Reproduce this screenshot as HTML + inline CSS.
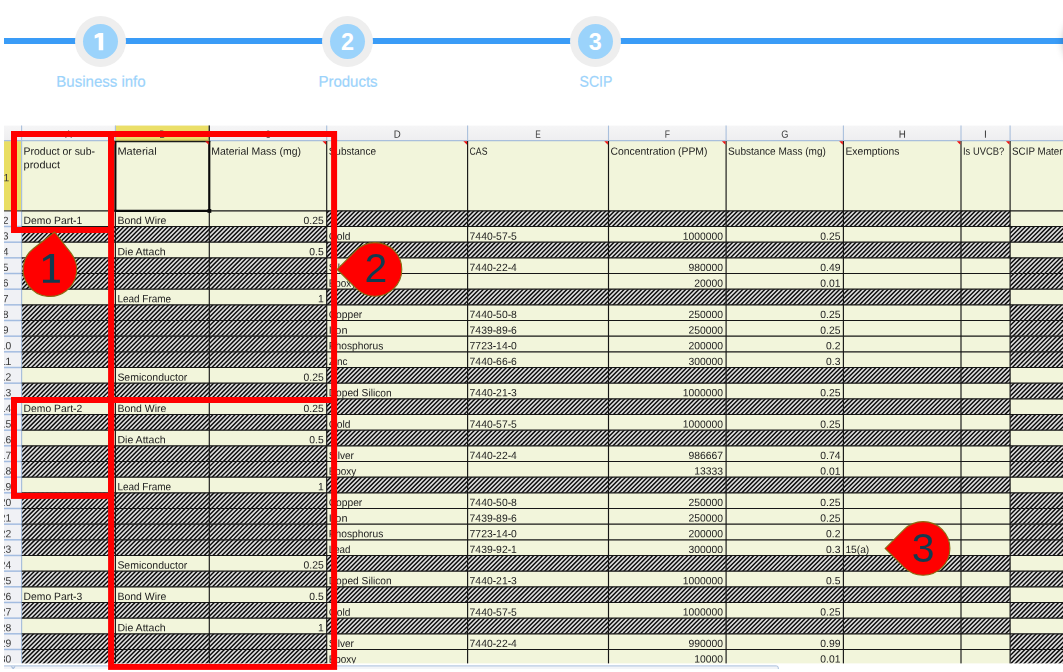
<!DOCTYPE html>
<html lang="en">
<head>
<meta charset="utf-8">
<title>SCIP template guide</title>
<style>
html,body{margin:0;padding:0;background:#fff;}
body{width:1063px;height:672px;overflow:hidden;position:relative;font-family:"Liberation Sans",sans-serif;}
.bar{position:absolute;left:4px;top:38px;width:1059px;height:6px;background:#3a9cf7;}
.ring{position:absolute;top:15.75px;width:51px;height:51px;border-radius:50%;background:#eeeeee;}
.dot{position:absolute;overflow:hidden;top:23.75px;width:35px;height:35px;border-radius:50%;background:#9bd3fb;color:#fff;
  font-weight:bold;font-size:23.4px;line-height:36.6px;text-align:center;}
.lab{position:absolute;top:72px;width:200px;text-align:center;color:#9bd3fb;font-size:15.5px;line-height:18px;white-space:nowrap;-webkit-text-stroke:0.2px #9bd3fb;}
.edge{position:absolute;left:1064.5px;top:15.75px;width:51px;height:51px;border-radius:50%;background:#eee;
  box-shadow:0 0 8px 1px rgba(0,0,0,.30);}
svg{position:absolute;left:0;top:0;will-change:transform;font-family:"Liberation Sans",sans-serif;}
</style>
</head>
<body>
<div class="bar"></div>
<div class="ring" style="left:75.00px"></div><div class="dot" style="left:83.00px"><svg width="35" height="35" viewBox="0 0 35 35" style="position:absolute;left:0;top:0"><path d="M15.75,9.05 L20.25,9.05 L20.25,26.15 L15.75,26.15 L15.75,13.3 L11.7,14.6 L11.7,11.3 Z" fill="#fff"/></svg></div><div class="lab" style="left:0.50px;transform:translateY(0.8px) scaleX(0.968) rotate(0.06deg)">Business info</div><div class="ring" style="left:322.10px"></div><div class="dot" style="left:330.10px">2</div><div class="lab" style="left:247.60px;transform:translateY(0.8px) scaleX(0.968) rotate(0.06deg)">Products</div><div class="ring" style="left:569.70px"></div><div class="dot" style="left:577.70px">3</div><div class="lab" style="left:495.60px;transform:translateY(0.8px) scaleX(0.905) rotate(0.06deg)">SCIP</div>
<div class="edge"></div>
<svg width="1063" height="672" viewBox="0 0 1063 672">
<defs>
<linearGradient id="hg" x1="0" y1="0" x2="0" y2="1"><stop offset="0" stop-color="#f5f5f6"/><stop offset="1" stop-color="#eeeef0"/></linearGradient>
<clipPath id="sheet"><rect x="4.00" y="125.60" width="1061.00" height="543.00"/></clipPath>
<filter id="soft" x="0" y="0" width="100%" height="100%" filterUnits="userSpaceOnUse" color-interpolation-filters="sRGB"><feGaussianBlur stdDeviation="0.33"/></filter>
</defs>
<g clip-path="url(#sheet)"><g filter="url(#soft)">
<rect x="4.00" y="125.60" width="1063.00" height="543.00" fill="#ffffff" />
<rect x="4.00" y="125.60" width="1063.00" height="15.00" fill="url(#hg)" />
<rect x="4.00" y="140.60" width="17.60" height="524.53" fill="#f0f1f5" />
<rect x="115.40" y="125.60" width="93.90" height="14.50" fill="#ebdf68" />
<rect x="4.00" y="141.10" width="17.60" height="69.75" fill="#e9de63" />
<rect x="21.60" y="140.60" width="1045.40" height="524.53" fill="#f2f5db" />
<clipPath id="hc"><rect x="326.70" y="210.85" width="683.40" height="15.66"/><rect x="21.60" y="226.51" width="305.10" height="15.66"/><rect x="1010.10" y="226.51" width="56.90" height="15.66"/><rect x="326.70" y="242.18" width="683.40" height="15.66"/><rect x="21.60" y="257.84" width="305.10" height="15.66"/><rect x="1010.10" y="257.84" width="56.90" height="15.66"/><rect x="21.60" y="273.51" width="305.10" height="15.66"/><rect x="1010.10" y="273.51" width="56.90" height="15.66"/><rect x="326.70" y="289.17" width="683.40" height="15.66"/><rect x="21.60" y="304.84" width="305.10" height="15.66"/><rect x="1010.10" y="304.84" width="56.90" height="15.66"/><rect x="21.60" y="320.50" width="305.10" height="15.66"/><rect x="1010.10" y="320.50" width="56.90" height="15.66"/><rect x="21.60" y="336.17" width="305.10" height="15.66"/><rect x="1010.10" y="336.17" width="56.90" height="15.66"/><rect x="21.60" y="351.83" width="305.10" height="15.66"/><rect x="1010.10" y="351.83" width="56.90" height="15.66"/><rect x="326.70" y="367.50" width="683.40" height="15.66"/><rect x="21.60" y="383.16" width="305.10" height="15.66"/><rect x="1010.10" y="383.16" width="56.90" height="15.66"/><rect x="326.70" y="398.83" width="683.40" height="15.66"/><rect x="21.60" y="414.50" width="305.10" height="15.66"/><rect x="1010.10" y="414.50" width="56.90" height="15.66"/><rect x="326.70" y="430.16" width="683.40" height="15.66"/><rect x="21.60" y="445.82" width="305.10" height="15.66"/><rect x="1010.10" y="445.82" width="56.90" height="15.66"/><rect x="21.60" y="461.49" width="305.10" height="15.66"/><rect x="1010.10" y="461.49" width="56.90" height="15.66"/><rect x="326.70" y="477.15" width="683.40" height="15.66"/><rect x="21.60" y="492.82" width="305.10" height="15.66"/><rect x="1010.10" y="492.82" width="56.90" height="15.66"/><rect x="21.60" y="508.49" width="305.10" height="15.66"/><rect x="1010.10" y="508.49" width="56.90" height="15.66"/><rect x="21.60" y="524.15" width="305.10" height="15.66"/><rect x="1010.10" y="524.15" width="56.90" height="15.66"/><rect x="21.60" y="539.81" width="305.10" height="15.66"/><rect x="1010.10" y="539.81" width="56.90" height="15.66"/><rect x="326.70" y="555.48" width="683.40" height="15.66"/><rect x="21.60" y="571.14" width="305.10" height="15.66"/><rect x="1010.10" y="571.14" width="56.90" height="15.66"/><rect x="326.70" y="586.81" width="683.40" height="15.66"/><rect x="21.60" y="602.48" width="305.10" height="15.66"/><rect x="1010.10" y="602.48" width="56.90" height="15.66"/><rect x="326.70" y="618.14" width="683.40" height="15.66"/><rect x="21.60" y="633.80" width="305.10" height="15.66"/><rect x="1010.10" y="633.80" width="56.90" height="15.66"/><rect x="21.60" y="649.47" width="305.10" height="15.66"/><rect x="1010.10" y="649.47" width="56.90" height="15.66"/></clipPath>
<rect x="326.70" y="210.85" width="683.40" height="15.66" fill="#dedede" />
<rect x="21.60" y="226.51" width="305.10" height="15.66" fill="#dedede" />
<rect x="1010.10" y="226.51" width="56.90" height="15.66" fill="#dedede" />
<rect x="326.70" y="242.18" width="683.40" height="15.66" fill="#dedede" />
<rect x="21.60" y="257.84" width="305.10" height="15.66" fill="#dedede" />
<rect x="1010.10" y="257.84" width="56.90" height="15.66" fill="#dedede" />
<rect x="21.60" y="273.51" width="305.10" height="15.66" fill="#dedede" />
<rect x="1010.10" y="273.51" width="56.90" height="15.66" fill="#dedede" />
<rect x="326.70" y="289.17" width="683.40" height="15.66" fill="#dedede" />
<rect x="21.60" y="304.84" width="305.10" height="15.66" fill="#dedede" />
<rect x="1010.10" y="304.84" width="56.90" height="15.66" fill="#dedede" />
<rect x="21.60" y="320.50" width="305.10" height="15.66" fill="#dedede" />
<rect x="1010.10" y="320.50" width="56.90" height="15.66" fill="#dedede" />
<rect x="21.60" y="336.17" width="305.10" height="15.66" fill="#dedede" />
<rect x="1010.10" y="336.17" width="56.90" height="15.66" fill="#dedede" />
<rect x="21.60" y="351.83" width="305.10" height="15.66" fill="#dedede" />
<rect x="1010.10" y="351.83" width="56.90" height="15.66" fill="#dedede" />
<rect x="326.70" y="367.50" width="683.40" height="15.66" fill="#dedede" />
<rect x="21.60" y="383.16" width="305.10" height="15.66" fill="#dedede" />
<rect x="1010.10" y="383.16" width="56.90" height="15.66" fill="#dedede" />
<rect x="326.70" y="398.83" width="683.40" height="15.66" fill="#dedede" />
<rect x="21.60" y="414.50" width="305.10" height="15.66" fill="#dedede" />
<rect x="1010.10" y="414.50" width="56.90" height="15.66" fill="#dedede" />
<rect x="326.70" y="430.16" width="683.40" height="15.66" fill="#dedede" />
<rect x="21.60" y="445.82" width="305.10" height="15.66" fill="#dedede" />
<rect x="1010.10" y="445.82" width="56.90" height="15.66" fill="#dedede" />
<rect x="21.60" y="461.49" width="305.10" height="15.66" fill="#dedede" />
<rect x="1010.10" y="461.49" width="56.90" height="15.66" fill="#dedede" />
<rect x="326.70" y="477.15" width="683.40" height="15.66" fill="#dedede" />
<rect x="21.60" y="492.82" width="305.10" height="15.66" fill="#dedede" />
<rect x="1010.10" y="492.82" width="56.90" height="15.66" fill="#dedede" />
<rect x="21.60" y="508.49" width="305.10" height="15.66" fill="#dedede" />
<rect x="1010.10" y="508.49" width="56.90" height="15.66" fill="#dedede" />
<rect x="21.60" y="524.15" width="305.10" height="15.66" fill="#dedede" />
<rect x="1010.10" y="524.15" width="56.90" height="15.66" fill="#dedede" />
<rect x="21.60" y="539.81" width="305.10" height="15.66" fill="#dedede" />
<rect x="1010.10" y="539.81" width="56.90" height="15.66" fill="#dedede" />
<rect x="326.70" y="555.48" width="683.40" height="15.66" fill="#dedede" />
<rect x="21.60" y="571.14" width="305.10" height="15.66" fill="#dedede" />
<rect x="1010.10" y="571.14" width="56.90" height="15.66" fill="#dedede" />
<rect x="326.70" y="586.81" width="683.40" height="15.66" fill="#dedede" />
<rect x="21.60" y="602.48" width="305.10" height="15.66" fill="#dedede" />
<rect x="1010.10" y="602.48" width="56.90" height="15.66" fill="#dedede" />
<rect x="326.70" y="618.14" width="683.40" height="15.66" fill="#dedede" />
<rect x="21.60" y="633.80" width="305.10" height="15.66" fill="#dedede" />
<rect x="1010.10" y="633.80" width="56.90" height="15.66" fill="#dedede" />
<rect x="21.60" y="649.47" width="305.10" height="15.66" fill="#dedede" />
<rect x="1010.10" y="649.47" width="56.90" height="15.66" fill="#dedede" />
<path clip-path="url(#hc)" d="M-439.68,667.13L18.60,208.85M-435.29,667.13L23.00,208.85M-430.89,667.13L27.40,208.85M-426.49,667.13L31.79,208.85M-422.09,667.13L36.19,208.85M-417.69,667.13L40.59,208.85M-413.30,667.13L44.99,208.85M-408.90,667.13L49.39,208.85M-404.50,667.13L53.79,208.85M-400.10,667.13L58.18,208.85M-395.70,667.13L62.58,208.85M-391.30,667.13L66.98,208.85M-386.91,667.13L71.38,208.85M-382.51,667.13L75.78,208.85M-378.11,667.13L80.17,208.85M-373.71,667.13L84.57,208.85M-369.31,667.13L88.97,208.85M-364.92,667.13L93.37,208.85M-360.52,667.13L97.77,208.85M-356.12,667.13L102.17,208.85M-351.72,667.13L106.56,208.85M-347.32,667.13L110.96,208.85M-342.92,667.13L115.36,208.85M-338.53,667.13L119.76,208.85M-334.13,667.13L124.16,208.85M-329.73,667.13L128.56,208.85M-325.33,667.13L132.95,208.85M-320.93,667.13L137.35,208.85M-316.54,667.13L141.75,208.85M-312.14,667.13L146.15,208.85M-307.74,667.13L150.55,208.85M-303.34,667.13L154.94,208.85M-298.94,667.13L159.34,208.85M-294.54,667.13L163.74,208.85M-290.15,667.13L168.14,208.85M-285.75,667.13L172.54,208.85M-281.35,667.13L176.94,208.85M-276.95,667.13L181.33,208.85M-272.55,667.13L185.73,208.85M-268.16,667.13L190.13,208.85M-263.76,667.13L194.53,208.85M-259.36,667.13L198.93,208.85M-254.96,667.13L203.32,208.85M-250.56,667.13L207.72,208.85M-246.16,667.13L212.12,208.85M-241.77,667.13L216.52,208.85M-237.37,667.13L220.92,208.85M-232.97,667.13L225.32,208.85M-228.57,667.13L229.71,208.85M-224.17,667.13L234.11,208.85M-219.77,667.13L238.51,208.85M-215.38,667.13L242.91,208.85M-210.98,667.13L247.31,208.85M-206.58,667.13L251.70,208.85M-202.18,667.13L256.10,208.85M-197.78,667.13L260.50,208.85M-193.39,667.13L264.90,208.85M-188.99,667.13L269.30,208.85M-184.59,667.13L273.70,208.85M-180.19,667.13L278.09,208.85M-175.79,667.13L282.49,208.85M-171.39,667.13L286.89,208.85M-167.00,667.13L291.29,208.85M-162.60,667.13L295.69,208.85M-158.20,667.13L300.09,208.85M-153.80,667.13L304.48,208.85M-149.40,667.13L308.88,208.85M-145.01,667.13L313.28,208.85M-140.61,667.13L317.68,208.85M-136.21,667.13L322.08,208.85M-131.81,667.13L326.47,208.85M-127.41,667.13L330.87,208.85M-123.01,667.13L335.27,208.85M-118.62,667.13L339.67,208.85M-114.22,667.13L344.07,208.85M-109.82,667.13L348.47,208.85M-105.42,667.13L352.86,208.85M-101.02,667.13L357.26,208.85M-96.63,667.13L361.66,208.85M-92.23,667.13L366.06,208.85M-87.83,667.13L370.46,208.85M-83.43,667.13L374.85,208.85M-79.03,667.13L379.25,208.85M-74.63,667.13L383.65,208.85M-70.24,667.13L388.05,208.85M-65.84,667.13L392.45,208.85M-61.44,667.13L396.85,208.85M-57.04,667.13L401.24,208.85M-52.64,667.13L405.64,208.85M-48.24,667.13L410.04,208.85M-43.85,667.13L414.44,208.85M-39.45,667.13L418.84,208.85M-35.05,667.13L423.23,208.85M-30.65,667.13L427.63,208.85M-26.25,667.13L432.03,208.85M-21.86,667.13L436.43,208.85M-17.46,667.13L440.83,208.85M-13.06,667.13L445.23,208.85M-8.66,667.13L449.62,208.85M-4.26,667.13L454.02,208.85M0.14,667.13L458.42,208.85M4.53,667.13L462.82,208.85M8.93,667.13L467.22,208.85M13.33,667.13L471.62,208.85M17.73,667.13L476.01,208.85M22.13,667.13L480.41,208.85M26.52,667.13L484.81,208.85M30.92,667.13L489.21,208.85M35.32,667.13L493.61,208.85M39.72,667.13L498.00,208.85M44.12,667.13L502.40,208.85M48.52,667.13L506.80,208.85M52.91,667.13L511.20,208.85M57.31,667.13L515.60,208.85M61.71,667.13L520.00,208.85M66.11,667.13L524.39,208.85M70.51,667.13L528.79,208.85M74.90,667.13L533.19,208.85M79.30,667.13L537.59,208.85M83.70,667.13L541.99,208.85M88.10,667.13L546.38,208.85M92.50,667.13L550.78,208.85M96.90,667.13L555.18,208.85M101.29,667.13L559.58,208.85M105.69,667.13L563.98,208.85M110.09,667.13L568.38,208.85M114.49,667.13L572.77,208.85M118.89,667.13L577.17,208.85M123.29,667.13L581.57,208.85M127.68,667.13L585.97,208.85M132.08,667.13L590.37,208.85M136.48,667.13L594.76,208.85M140.88,667.13L599.16,208.85M145.28,667.13L603.56,208.85M149.67,667.13L607.96,208.85M154.07,667.13L612.36,208.85M158.47,667.13L616.76,208.85M162.87,667.13L621.15,208.85M167.27,667.13L625.55,208.85M171.67,667.13L629.95,208.85M176.06,667.13L634.35,208.85M180.46,667.13L638.75,208.85M184.86,667.13L643.14,208.85M189.26,667.13L647.54,208.85M193.66,667.13L651.94,208.85M198.05,667.13L656.34,208.85M202.45,667.13L660.74,208.85M206.85,667.13L665.14,208.85M211.25,667.13L669.53,208.85M215.65,667.13L673.93,208.85M220.05,667.13L678.33,208.85M224.44,667.13L682.73,208.85M228.84,667.13L687.13,208.85M233.24,667.13L691.53,208.85M237.64,667.13L695.92,208.85M242.04,667.13L700.32,208.85M246.43,667.13L704.72,208.85M250.83,667.13L709.12,208.85M255.23,667.13L713.52,208.85M259.63,667.13L717.91,208.85M264.03,667.13L722.31,208.85M268.43,667.13L726.71,208.85M272.82,667.13L731.11,208.85M277.22,667.13L735.51,208.85M281.62,667.13L739.91,208.85M286.02,667.13L744.30,208.85M290.42,667.13L748.70,208.85M294.82,667.13L753.10,208.85M299.21,667.13L757.50,208.85M303.61,667.13L761.90,208.85M308.01,667.13L766.29,208.85M312.41,667.13L770.69,208.85M316.81,667.13L775.09,208.85M321.20,667.13L779.49,208.85M325.60,667.13L783.89,208.85M330.00,667.13L788.29,208.85M334.40,667.13L792.68,208.85M338.80,667.13L797.08,208.85M343.20,667.13L801.48,208.85M347.59,667.13L805.88,208.85M351.99,667.13L810.28,208.85M356.39,667.13L814.67,208.85M360.79,667.13L819.07,208.85M365.19,667.13L823.47,208.85M369.58,667.13L827.87,208.85M373.98,667.13L832.27,208.85M378.38,667.13L836.67,208.85M382.78,667.13L841.06,208.85M387.18,667.13L845.46,208.85M391.58,667.13L849.86,208.85M395.97,667.13L854.26,208.85M400.37,667.13L858.66,208.85M404.77,667.13L863.06,208.85M409.17,667.13L867.45,208.85M413.57,667.13L871.85,208.85M417.96,667.13L876.25,208.85M422.36,667.13L880.65,208.85M426.76,667.13L885.05,208.85M431.16,667.13L889.44,208.85M435.56,667.13L893.84,208.85M439.96,667.13L898.24,208.85M444.35,667.13L902.64,208.85M448.75,667.13L907.04,208.85M453.15,667.13L911.44,208.85M457.55,667.13L915.83,208.85M461.95,667.13L920.23,208.85M466.35,667.13L924.63,208.85M470.74,667.13L929.03,208.85M475.14,667.13L933.43,208.85M479.54,667.13L937.82,208.85M483.94,667.13L942.22,208.85M488.34,667.13L946.62,208.85M492.73,667.13L951.02,208.85M497.13,667.13L955.42,208.85M501.53,667.13L959.82,208.85M505.93,667.13L964.21,208.85M510.33,667.13L968.61,208.85M514.73,667.13L973.01,208.85M519.12,667.13L977.41,208.85M523.52,667.13L981.81,208.85M527.92,667.13L986.20,208.85M532.32,667.13L990.60,208.85M536.72,667.13L995.00,208.85M541.11,667.13L999.40,208.85M545.51,667.13L1003.80,208.85M549.91,667.13L1008.20,208.85M554.31,667.13L1012.59,208.85M558.71,667.13L1016.99,208.85M563.11,667.13L1021.39,208.85M567.50,667.13L1025.79,208.85M571.90,667.13L1030.19,208.85M576.30,667.13L1034.59,208.85M580.70,667.13L1038.98,208.85M585.10,667.13L1043.38,208.85M589.49,667.13L1047.78,208.85M593.89,667.13L1052.18,208.85M598.29,667.13L1056.58,208.85M602.69,667.13L1060.97,208.85M607.09,667.13L1065.37,208.85M611.49,667.13L1069.77,208.85M615.88,667.13L1074.17,208.85M620.28,667.13L1078.57,208.85M624.68,667.13L1082.97,208.85M629.08,667.13L1087.36,208.85M633.48,667.13L1091.76,208.85M637.88,667.13L1096.16,208.85M642.27,667.13L1100.56,208.85M646.67,667.13L1104.96,208.85M651.07,667.13L1109.35,208.85M655.47,667.13L1113.75,208.85M659.87,667.13L1118.15,208.85M664.26,667.13L1122.55,208.85M668.66,667.13L1126.95,208.85M673.06,667.13L1131.35,208.85M677.46,667.13L1135.74,208.85M681.86,667.13L1140.14,208.85M686.26,667.13L1144.54,208.85M690.65,667.13L1148.94,208.85M695.05,667.13L1153.34,208.85M699.45,667.13L1157.73,208.85M703.85,667.13L1162.13,208.85M708.25,667.13L1166.53,208.85M712.64,667.13L1170.93,208.85M717.04,667.13L1175.33,208.85M721.44,667.13L1179.73,208.85M725.84,667.13L1184.12,208.85M730.24,667.13L1188.52,208.85M734.64,667.13L1192.92,208.85M739.03,667.13L1197.32,208.85M743.43,667.13L1201.72,208.85M747.83,667.13L1206.12,208.85M752.23,667.13L1210.51,208.85M756.63,667.13L1214.91,208.85M761.02,667.13L1219.31,208.85M765.42,667.13L1223.71,208.85M769.82,667.13L1228.11,208.85M774.22,667.13L1232.50,208.85M778.62,667.13L1236.90,208.85M783.02,667.13L1241.30,208.85M787.41,667.13L1245.70,208.85M791.81,667.13L1250.10,208.85M796.21,667.13L1254.50,208.85M800.61,667.13L1258.89,208.85M805.01,667.13L1263.29,208.85M809.40,667.13L1267.69,208.85M813.80,667.13L1272.09,208.85M818.20,667.13L1276.49,208.85M822.60,667.13L1280.88,208.85M827.00,667.13L1285.28,208.85M831.40,667.13L1289.68,208.85M835.79,667.13L1294.08,208.85M840.19,667.13L1298.48,208.85M844.59,667.13L1302.88,208.85M848.99,667.13L1307.27,208.85M853.39,667.13L1311.67,208.85M857.79,667.13L1316.07,208.85M862.18,667.13L1320.47,208.85M866.58,667.13L1324.87,208.85M870.98,667.13L1329.26,208.85M875.38,667.13L1333.66,208.85M879.78,667.13L1338.06,208.85M884.17,667.13L1342.46,208.85M888.57,667.13L1346.86,208.85M892.97,667.13L1351.26,208.85M897.37,667.13L1355.65,208.85M901.77,667.13L1360.05,208.85M906.17,667.13L1364.45,208.85M910.56,667.13L1368.85,208.85M914.96,667.13L1373.25,208.85M919.36,667.13L1377.65,208.85M923.76,667.13L1382.04,208.85M928.16,667.13L1386.44,208.85M932.55,667.13L1390.84,208.85M936.95,667.13L1395.24,208.85M941.35,667.13L1399.64,208.85M945.75,667.13L1404.03,208.85M950.15,667.13L1408.43,208.85M954.55,667.13L1412.83,208.85M958.94,667.13L1417.23,208.85M963.34,667.13L1421.63,208.85M967.74,667.13L1426.03,208.85M972.14,667.13L1430.42,208.85M976.54,667.13L1434.82,208.85M980.93,667.13L1439.22,208.85M985.33,667.13L1443.62,208.85M989.73,667.13L1448.02,208.85M994.13,667.13L1452.41,208.85M998.53,667.13L1456.81,208.85M1002.93,667.13L1461.21,208.85M1007.32,667.13L1465.61,208.85M1011.72,667.13L1470.01,208.85M1016.12,667.13L1474.41,208.85M1020.52,667.13L1478.80,208.85M1024.92,667.13L1483.20,208.85M1029.32,667.13L1487.60,208.85M1033.71,667.13L1492.00,208.85M1038.11,667.13L1496.40,208.85M1042.51,667.13L1500.79,208.85M1046.91,667.13L1505.19,208.85M1051.31,667.13L1509.59,208.85M1055.70,667.13L1513.99,208.85M1060.10,667.13L1518.39,208.85M1064.50,667.13L1522.79,208.85M1068.90,667.13L1527.18,208.85" stroke="#0c0c0c" stroke-width="1.462" fill="none"/>
<line x1="21.60" y1="125.60" x2="21.60" y2="140.60" stroke="#a9bfdc" stroke-width="1.1" />
<text x="68.50" y="137.80" transform="rotate(0.06 68.50 137.80)" font-size="10.5" fill="#3a3a3a" text-anchor="middle" textLength="6.58" lengthAdjust="spacingAndGlyphs" >A</text>
<line x1="115.40" y1="125.60" x2="115.40" y2="140.60" stroke="#a9bfdc" stroke-width="1.1" />
<text x="162.35" y="137.80" transform="rotate(0.06 162.35 137.80)" font-size="10.5" fill="#3a3a3a" text-anchor="middle" textLength="6.18" lengthAdjust="spacingAndGlyphs" >B</text>
<line x1="209.30" y1="125.60" x2="209.30" y2="140.60" stroke="#a9bfdc" stroke-width="1.1" />
<text x="268.00" y="137.80" transform="rotate(0.06 268.00 137.80)" font-size="10.5" fill="#3a3a3a" text-anchor="middle" textLength="6.06" lengthAdjust="spacingAndGlyphs" >C</text>
<line x1="326.70" y1="125.60" x2="326.70" y2="140.60" stroke="#a9bfdc" stroke-width="1.1" />
<text x="397.15" y="137.80" transform="rotate(0.06 397.15 137.80)" font-size="10.5" fill="#3a3a3a" text-anchor="middle" textLength="6.99" lengthAdjust="spacingAndGlyphs" >D</text>
<line x1="467.60" y1="125.60" x2="467.60" y2="140.60" stroke="#a9bfdc" stroke-width="1.1" />
<text x="538.05" y="137.80" transform="rotate(0.06 538.05 137.80)" font-size="10.5" fill="#3a3a3a" text-anchor="middle" textLength="5.55" lengthAdjust="spacingAndGlyphs" >E</text>
<line x1="608.50" y1="125.60" x2="608.50" y2="140.60" stroke="#a9bfdc" stroke-width="1.1" />
<text x="667.30" y="137.80" transform="rotate(0.06 667.30 137.80)" font-size="10.5" fill="#3a3a3a" text-anchor="middle" textLength="5.22" lengthAdjust="spacingAndGlyphs" >F</text>
<line x1="726.10" y1="125.60" x2="726.10" y2="140.60" stroke="#a9bfdc" stroke-width="1.1" />
<text x="784.75" y="137.80" transform="rotate(0.06 784.75 137.80)" font-size="10.5" fill="#3a3a3a" text-anchor="middle" textLength="7.17" lengthAdjust="spacingAndGlyphs" >G</text>
<line x1="843.40" y1="125.60" x2="843.40" y2="140.60" stroke="#a9bfdc" stroke-width="1.1" />
<text x="902.20" y="137.80" transform="rotate(0.06 902.20 137.80)" font-size="10.5" fill="#3a3a3a" text-anchor="middle" textLength="7.08" lengthAdjust="spacingAndGlyphs" >H</text>
<line x1="961.00" y1="125.60" x2="961.00" y2="140.60" stroke="#a9bfdc" stroke-width="1.1" />
<text x="985.55" y="137.80" transform="rotate(0.06 985.55 137.80)" font-size="10.5" fill="#3a3a3a" text-anchor="middle" textLength="2.86" lengthAdjust="spacingAndGlyphs" >I</text>
<line x1="1010.10" y1="125.60" x2="1010.10" y2="140.60" stroke="#a9bfdc" stroke-width="1.1" />
<text x="1070.05" y="137.80" transform="rotate(0.06 1070.05 137.80)" font-size="10.5" fill="#3a3a3a" text-anchor="middle" textLength="3.62" lengthAdjust="spacingAndGlyphs" >J</text>
<line x1="4.00" y1="140.60" x2="1063.00" y2="140.60" stroke="#a9bfdc" stroke-width="1.2" />
<line x1="21.60" y1="140.60" x2="21.60" y2="665.13" stroke="#a9bfdc" stroke-width="1.2" />
<text x="6.40" y="181.20" transform="rotate(0.06 6.40 181.20)" font-size="10.5" fill="#3a3a3a" text-anchor="middle" textLength="5.76" lengthAdjust="spacingAndGlyphs" >1</text>
<line x1="4.00" y1="226.51" x2="21.60" y2="226.51" stroke="#a3bce0" stroke-width="1.5" />
<text x="5.60" y="223.91" transform="rotate(0.06 5.60 223.91)" font-size="10.5" fill="#3a3a3a" text-anchor="middle" textLength="5.76" lengthAdjust="spacingAndGlyphs" >2</text>
<line x1="4.00" y1="242.18" x2="21.60" y2="242.18" stroke="#a3bce0" stroke-width="1.5" />
<text x="5.60" y="239.58" transform="rotate(0.06 5.60 239.58)" font-size="10.5" fill="#3a3a3a" text-anchor="middle" textLength="5.76" lengthAdjust="spacingAndGlyphs" >3</text>
<line x1="4.00" y1="257.84" x2="21.60" y2="257.84" stroke="#a3bce0" stroke-width="1.5" />
<text x="5.60" y="255.24" transform="rotate(0.06 5.60 255.24)" font-size="10.5" fill="#3a3a3a" text-anchor="middle" textLength="5.76" lengthAdjust="spacingAndGlyphs" >4</text>
<line x1="4.00" y1="273.51" x2="21.60" y2="273.51" stroke="#a3bce0" stroke-width="1.5" />
<text x="5.60" y="270.91" transform="rotate(0.06 5.60 270.91)" font-size="10.5" fill="#3a3a3a" text-anchor="middle" textLength="5.76" lengthAdjust="spacingAndGlyphs" >5</text>
<line x1="4.00" y1="289.17" x2="21.60" y2="289.17" stroke="#a3bce0" stroke-width="1.5" />
<text x="5.60" y="286.57" transform="rotate(0.06 5.60 286.57)" font-size="10.5" fill="#3a3a3a" text-anchor="middle" textLength="5.76" lengthAdjust="spacingAndGlyphs" >6</text>
<line x1="4.00" y1="304.84" x2="21.60" y2="304.84" stroke="#a3bce0" stroke-width="1.5" />
<text x="5.60" y="302.24" transform="rotate(0.06 5.60 302.24)" font-size="10.5" fill="#3a3a3a" text-anchor="middle" textLength="5.76" lengthAdjust="spacingAndGlyphs" >7</text>
<line x1="4.00" y1="320.50" x2="21.60" y2="320.50" stroke="#a3bce0" stroke-width="1.5" />
<text x="5.60" y="317.90" transform="rotate(0.06 5.60 317.90)" font-size="10.5" fill="#3a3a3a" text-anchor="middle" textLength="5.76" lengthAdjust="spacingAndGlyphs" >8</text>
<line x1="4.00" y1="336.17" x2="21.60" y2="336.17" stroke="#a3bce0" stroke-width="1.5" />
<text x="5.60" y="333.57" transform="rotate(0.06 5.60 333.57)" font-size="10.5" fill="#3a3a3a" text-anchor="middle" textLength="5.76" lengthAdjust="spacingAndGlyphs" >9</text>
<line x1="4.00" y1="351.83" x2="21.60" y2="351.83" stroke="#a3bce0" stroke-width="1.5" />
<text x="5.60" y="349.23" transform="rotate(0.06 5.60 349.23)" font-size="10.5" fill="#3a3a3a" text-anchor="middle" textLength="11.52" lengthAdjust="spacingAndGlyphs" >10</text>
<line x1="4.00" y1="367.50" x2="21.60" y2="367.50" stroke="#a3bce0" stroke-width="1.5" />
<text x="5.60" y="364.90" transform="rotate(0.06 5.60 364.90)" font-size="10.5" fill="#3a3a3a" text-anchor="middle" textLength="11.52" lengthAdjust="spacingAndGlyphs" >11</text>
<line x1="4.00" y1="383.16" x2="21.60" y2="383.16" stroke="#a3bce0" stroke-width="1.5" />
<text x="5.60" y="380.56" transform="rotate(0.06 5.60 380.56)" font-size="10.5" fill="#3a3a3a" text-anchor="middle" textLength="11.52" lengthAdjust="spacingAndGlyphs" >12</text>
<line x1="4.00" y1="398.83" x2="21.60" y2="398.83" stroke="#a3bce0" stroke-width="1.5" />
<text x="5.60" y="396.23" transform="rotate(0.06 5.60 396.23)" font-size="10.5" fill="#3a3a3a" text-anchor="middle" textLength="11.52" lengthAdjust="spacingAndGlyphs" >13</text>
<line x1="4.00" y1="414.50" x2="21.60" y2="414.50" stroke="#a3bce0" stroke-width="1.5" />
<text x="5.60" y="411.89" transform="rotate(0.06 5.60 411.89)" font-size="10.5" fill="#3a3a3a" text-anchor="middle" textLength="11.52" lengthAdjust="spacingAndGlyphs" >14</text>
<line x1="4.00" y1="430.16" x2="21.60" y2="430.16" stroke="#a3bce0" stroke-width="1.5" />
<text x="5.60" y="427.56" transform="rotate(0.06 5.60 427.56)" font-size="10.5" fill="#3a3a3a" text-anchor="middle" textLength="11.52" lengthAdjust="spacingAndGlyphs" >15</text>
<line x1="4.00" y1="445.82" x2="21.60" y2="445.82" stroke="#a3bce0" stroke-width="1.5" />
<text x="5.60" y="443.22" transform="rotate(0.06 5.60 443.22)" font-size="10.5" fill="#3a3a3a" text-anchor="middle" textLength="11.52" lengthAdjust="spacingAndGlyphs" >16</text>
<line x1="4.00" y1="461.49" x2="21.60" y2="461.49" stroke="#a3bce0" stroke-width="1.5" />
<text x="5.60" y="458.89" transform="rotate(0.06 5.60 458.89)" font-size="10.5" fill="#3a3a3a" text-anchor="middle" textLength="11.52" lengthAdjust="spacingAndGlyphs" >17</text>
<line x1="4.00" y1="477.15" x2="21.60" y2="477.15" stroke="#a3bce0" stroke-width="1.5" />
<text x="5.60" y="474.55" transform="rotate(0.06 5.60 474.55)" font-size="10.5" fill="#3a3a3a" text-anchor="middle" textLength="11.52" lengthAdjust="spacingAndGlyphs" >18</text>
<line x1="4.00" y1="492.82" x2="21.60" y2="492.82" stroke="#a3bce0" stroke-width="1.5" />
<text x="5.60" y="490.22" transform="rotate(0.06 5.60 490.22)" font-size="10.5" fill="#3a3a3a" text-anchor="middle" textLength="11.52" lengthAdjust="spacingAndGlyphs" >19</text>
<line x1="4.00" y1="508.49" x2="21.60" y2="508.49" stroke="#a3bce0" stroke-width="1.5" />
<text x="5.60" y="505.88" transform="rotate(0.06 5.60 505.88)" font-size="10.5" fill="#3a3a3a" text-anchor="middle" textLength="11.52" lengthAdjust="spacingAndGlyphs" >20</text>
<line x1="4.00" y1="524.15" x2="21.60" y2="524.15" stroke="#a3bce0" stroke-width="1.5" />
<text x="5.60" y="521.55" transform="rotate(0.06 5.60 521.55)" font-size="10.5" fill="#3a3a3a" text-anchor="middle" textLength="11.52" lengthAdjust="spacingAndGlyphs" >21</text>
<line x1="4.00" y1="539.81" x2="21.60" y2="539.81" stroke="#a3bce0" stroke-width="1.5" />
<text x="5.60" y="537.21" transform="rotate(0.06 5.60 537.21)" font-size="10.5" fill="#3a3a3a" text-anchor="middle" textLength="11.52" lengthAdjust="spacingAndGlyphs" >22</text>
<line x1="4.00" y1="555.48" x2="21.60" y2="555.48" stroke="#a3bce0" stroke-width="1.5" />
<text x="5.60" y="552.88" transform="rotate(0.06 5.60 552.88)" font-size="10.5" fill="#3a3a3a" text-anchor="middle" textLength="11.52" lengthAdjust="spacingAndGlyphs" >23</text>
<line x1="4.00" y1="571.14" x2="21.60" y2="571.14" stroke="#a3bce0" stroke-width="1.5" />
<text x="5.60" y="568.54" transform="rotate(0.06 5.60 568.54)" font-size="10.5" fill="#3a3a3a" text-anchor="middle" textLength="11.52" lengthAdjust="spacingAndGlyphs" >24</text>
<line x1="4.00" y1="586.81" x2="21.60" y2="586.81" stroke="#a3bce0" stroke-width="1.5" />
<text x="5.60" y="584.21" transform="rotate(0.06 5.60 584.21)" font-size="10.5" fill="#3a3a3a" text-anchor="middle" textLength="11.52" lengthAdjust="spacingAndGlyphs" >25</text>
<line x1="4.00" y1="602.48" x2="21.60" y2="602.48" stroke="#a3bce0" stroke-width="1.5" />
<text x="5.60" y="599.88" transform="rotate(0.06 5.60 599.88)" font-size="10.5" fill="#3a3a3a" text-anchor="middle" textLength="11.52" lengthAdjust="spacingAndGlyphs" >26</text>
<line x1="4.00" y1="618.14" x2="21.60" y2="618.14" stroke="#a3bce0" stroke-width="1.5" />
<text x="5.60" y="615.54" transform="rotate(0.06 5.60 615.54)" font-size="10.5" fill="#3a3a3a" text-anchor="middle" textLength="11.52" lengthAdjust="spacingAndGlyphs" >27</text>
<line x1="4.00" y1="633.80" x2="21.60" y2="633.80" stroke="#a3bce0" stroke-width="1.5" />
<text x="5.60" y="631.20" transform="rotate(0.06 5.60 631.20)" font-size="10.5" fill="#3a3a3a" text-anchor="middle" textLength="11.52" lengthAdjust="spacingAndGlyphs" >28</text>
<line x1="4.00" y1="649.47" x2="21.60" y2="649.47" stroke="#a3bce0" stroke-width="1.5" />
<text x="5.60" y="646.87" transform="rotate(0.06 5.60 646.87)" font-size="10.5" fill="#3a3a3a" text-anchor="middle" textLength="11.52" lengthAdjust="spacingAndGlyphs" >29</text>
<line x1="4.00" y1="665.13" x2="21.60" y2="665.13" stroke="#a3bce0" stroke-width="1.5" />
<text x="5.60" y="662.53" transform="rotate(0.06 5.60 662.53)" font-size="10.5" fill="#3a3a3a" text-anchor="middle" textLength="11.52" lengthAdjust="spacingAndGlyphs" >30</text>
<line x1="4.00" y1="210.85" x2="21.60" y2="210.85" stroke="#55544a" stroke-width="1.4" />
<line x1="21.60" y1="210.85" x2="1063.00" y2="210.85" stroke="#161616" stroke-width="1.15" />
<line x1="21.60" y1="226.51" x2="1063.00" y2="226.51" stroke="#161616" stroke-width="1.15" />
<line x1="21.60" y1="242.18" x2="1063.00" y2="242.18" stroke="#161616" stroke-width="1.15" />
<line x1="21.60" y1="257.84" x2="1063.00" y2="257.84" stroke="#161616" stroke-width="1.15" />
<line x1="21.60" y1="273.51" x2="1063.00" y2="273.51" stroke="#161616" stroke-width="1.15" />
<line x1="21.60" y1="289.17" x2="1063.00" y2="289.17" stroke="#161616" stroke-width="1.15" />
<line x1="21.60" y1="304.84" x2="1063.00" y2="304.84" stroke="#161616" stroke-width="1.15" />
<line x1="21.60" y1="320.50" x2="1063.00" y2="320.50" stroke="#161616" stroke-width="1.15" />
<line x1="21.60" y1="336.17" x2="1063.00" y2="336.17" stroke="#161616" stroke-width="1.15" />
<line x1="21.60" y1="351.83" x2="1063.00" y2="351.83" stroke="#161616" stroke-width="1.15" />
<line x1="21.60" y1="367.50" x2="1063.00" y2="367.50" stroke="#161616" stroke-width="1.15" />
<line x1="21.60" y1="383.16" x2="1063.00" y2="383.16" stroke="#161616" stroke-width="1.15" />
<line x1="21.60" y1="398.83" x2="1063.00" y2="398.83" stroke="#161616" stroke-width="1.15" />
<line x1="21.60" y1="414.50" x2="1063.00" y2="414.50" stroke="#161616" stroke-width="1.15" />
<line x1="21.60" y1="430.16" x2="1063.00" y2="430.16" stroke="#161616" stroke-width="1.15" />
<line x1="21.60" y1="445.82" x2="1063.00" y2="445.82" stroke="#161616" stroke-width="1.15" />
<line x1="21.60" y1="461.49" x2="1063.00" y2="461.49" stroke="#161616" stroke-width="1.15" />
<line x1="21.60" y1="477.15" x2="1063.00" y2="477.15" stroke="#161616" stroke-width="1.15" />
<line x1="21.60" y1="492.82" x2="1063.00" y2="492.82" stroke="#161616" stroke-width="1.15" />
<line x1="21.60" y1="508.49" x2="1063.00" y2="508.49" stroke="#161616" stroke-width="1.15" />
<line x1="21.60" y1="524.15" x2="1063.00" y2="524.15" stroke="#161616" stroke-width="1.15" />
<line x1="21.60" y1="539.81" x2="1063.00" y2="539.81" stroke="#161616" stroke-width="1.15" />
<line x1="21.60" y1="555.48" x2="1063.00" y2="555.48" stroke="#161616" stroke-width="1.15" />
<line x1="21.60" y1="571.14" x2="1063.00" y2="571.14" stroke="#161616" stroke-width="1.15" />
<line x1="21.60" y1="586.81" x2="1063.00" y2="586.81" stroke="#161616" stroke-width="1.15" />
<line x1="21.60" y1="602.48" x2="1063.00" y2="602.48" stroke="#161616" stroke-width="1.15" />
<line x1="21.60" y1="618.14" x2="1063.00" y2="618.14" stroke="#161616" stroke-width="1.15" />
<line x1="21.60" y1="633.80" x2="1063.00" y2="633.80" stroke="#161616" stroke-width="1.15" />
<line x1="21.60" y1="649.47" x2="1063.00" y2="649.47" stroke="#161616" stroke-width="1.15" />
<line x1="21.60" y1="665.13" x2="1063.00" y2="665.13" stroke="#161616" stroke-width="1.15" />
<line x1="115.40" y1="141.10" x2="115.40" y2="665.13" stroke="#161616" stroke-width="1.15" />
<line x1="209.30" y1="141.10" x2="209.30" y2="665.13" stroke="#161616" stroke-width="1.15" />
<line x1="326.70" y1="141.10" x2="326.70" y2="665.13" stroke="#161616" stroke-width="1.15" />
<line x1="467.60" y1="141.10" x2="467.60" y2="665.13" stroke="#161616" stroke-width="1.15" />
<line x1="608.50" y1="141.10" x2="608.50" y2="665.13" stroke="#161616" stroke-width="1.15" />
<line x1="726.10" y1="141.10" x2="726.10" y2="665.13" stroke="#161616" stroke-width="1.15" />
<line x1="843.40" y1="141.10" x2="843.40" y2="665.13" stroke="#161616" stroke-width="1.15" />
<line x1="961.00" y1="141.10" x2="961.00" y2="665.13" stroke="#161616" stroke-width="1.15" />
<line x1="1010.10" y1="141.10" x2="1010.10" y2="665.13" stroke="#161616" stroke-width="1.15" />
<line x1="114.40" y1="141.50" x2="210.30" y2="141.50" stroke="#1a1a1a" stroke-width="1.5" />
<line x1="114.40" y1="210.85" x2="210.30" y2="210.85" stroke="#0a0a0a" stroke-width="2.1" />
<line x1="115.40" y1="141.00" x2="115.40" y2="210.85" stroke="#0a0a0a" stroke-width="2.1" />
<line x1="209.30" y1="141.00" x2="209.30" y2="210.85" stroke="#0a0a0a" stroke-width="2.1" />
<line x1="209.30" y1="125.60" x2="209.30" y2="141.10" stroke="#2a2a2a" stroke-width="1.3" />
<line x1="115.40" y1="140.30" x2="209.30" y2="140.30" stroke="#b9a93c" stroke-width="1.0" />
<rect x="207.50" y="209.05" width="3.80" height="3.80" fill="#0a0a0a" />
<path d="M111.20,141.20 L114.80,141.20 L114.80,144.80 Z" fill="#ee1111"/>
<path d="M205.10,141.20 L208.70,141.20 L208.70,144.80 Z" fill="#ee1111"/>
<path d="M322.50,141.20 L326.10,141.20 L326.10,144.80 Z" fill="#ee1111"/>
<path d="M463.40,141.20 L467.00,141.20 L467.00,144.80 Z" fill="#ee1111"/>
<path d="M604.30,141.20 L607.90,141.20 L607.90,144.80 Z" fill="#ee1111"/>
<path d="M721.90,141.20 L725.50,141.20 L725.50,144.80 Z" fill="#ee1111"/>
<path d="M839.20,141.20 L842.80,141.20 L842.80,144.80 Z" fill="#ee1111"/>
<path d="M956.80,141.20 L960.40,141.20 L960.40,144.80 Z" fill="#ee1111"/>
<path d="M1005.90,141.20 L1009.50,141.20 L1009.50,144.80 Z" fill="#ee1111"/>
<path d="M1125.80,141.20 L1129.40,141.20 L1129.40,144.80 Z" fill="#ee1111"/>
<text x="23.60" y="154.70" transform="rotate(0.06 23.60 154.70)" font-size="10.5" fill="#1c1c1c" text-anchor="start" textLength="71.35" lengthAdjust="spacingAndGlyphs" >Product or sub-</text>
<text x="23.60" y="168.30" transform="rotate(0.06 23.60 168.30)" font-size="10.5" fill="#1c1c1c" text-anchor="start" textLength="36.48" lengthAdjust="spacingAndGlyphs" >product</text>
<text x="117.40" y="154.70" transform="rotate(0.06 117.40 154.70)" font-size="10.5" fill="#1c1c1c" text-anchor="start" textLength="39.25" lengthAdjust="spacingAndGlyphs" >Material</text>
<text x="211.30" y="154.70" transform="rotate(0.06 211.30 154.70)" font-size="10.5" fill="#1c1c1c" text-anchor="start" textLength="89.76" lengthAdjust="spacingAndGlyphs" >Material Mass (mg)</text>
<text x="328.70" y="154.70" transform="rotate(0.06 328.70 154.70)" font-size="10.5" fill="#1c1c1c" text-anchor="start" textLength="47.29" lengthAdjust="spacingAndGlyphs" >Substance</text>
<text x="469.60" y="154.70" transform="rotate(0.06 469.60 154.70)" font-size="10.5" fill="#1c1c1c" text-anchor="start" textLength="17.86" lengthAdjust="spacingAndGlyphs" >CAS</text>
<text x="610.50" y="154.70" transform="rotate(0.06 610.50 154.70)" font-size="10.5" fill="#1c1c1c" text-anchor="start" textLength="96.97" lengthAdjust="spacingAndGlyphs" >Concentration (PPM)</text>
<text x="728.10" y="154.70" transform="rotate(0.06 728.10 154.70)" font-size="10.5" fill="#1c1c1c" text-anchor="start" textLength="97.81" lengthAdjust="spacingAndGlyphs" >Substance Mass (mg)</text>
<text x="845.40" y="154.70" transform="rotate(0.06 845.40 154.70)" font-size="10.5" fill="#1c1c1c" text-anchor="start" textLength="54.00" lengthAdjust="spacingAndGlyphs" >Exemptions</text>
<text x="963.00" y="154.70" transform="rotate(0.06 963.00 154.70)" font-size="10.5" fill="#1c1c1c" text-anchor="start" textLength="41.13" lengthAdjust="spacingAndGlyphs" >Is UVCB?</text>
<text x="1012.10" y="154.70" transform="rotate(0.06 1012.10 154.70)" font-size="10.5" fill="#1c1c1c" text-anchor="start" textLength="102.64" lengthAdjust="spacingAndGlyphs" >SCIP Material Category</text>
<text x="23.60" y="224.01" transform="rotate(0.06 23.60 224.01)" font-size="10.5" fill="#1c1c1c" text-anchor="start" textLength="58.61" lengthAdjust="spacingAndGlyphs" >Demo Part-1</text>
<text x="117.40" y="224.01" transform="rotate(0.06 117.40 224.01)" font-size="10.5" fill="#1c1c1c" text-anchor="start" textLength="49.03" lengthAdjust="spacingAndGlyphs" >Bond Wire</text>
<text x="323.70" y="224.01" transform="rotate(0.06 323.70 224.01)" font-size="10.5" fill="#1c1c1c" text-anchor="end" textLength="20.15" lengthAdjust="spacingAndGlyphs" >0.25</text>
<text x="328.70" y="239.68" transform="rotate(0.06 328.70 239.68)" font-size="10.5" fill="#1c1c1c" text-anchor="start" textLength="21.74" lengthAdjust="spacingAndGlyphs" >Gold</text>
<text x="469.60" y="239.68" transform="rotate(0.06 469.60 239.68)" font-size="10.5" fill="#1c1c1c" text-anchor="start" textLength="47.28" lengthAdjust="spacingAndGlyphs" >7440-57-5</text>
<text x="723.10" y="239.68" transform="rotate(0.06 723.10 239.68)" font-size="10.5" fill="#1c1c1c" text-anchor="end" textLength="40.32" lengthAdjust="spacingAndGlyphs" >1000000</text>
<text x="840.40" y="239.68" transform="rotate(0.06 840.40 239.68)" font-size="10.5" fill="#1c1c1c" text-anchor="end" textLength="20.15" lengthAdjust="spacingAndGlyphs" >0.25</text>
<text x="117.40" y="255.34" transform="rotate(0.06 117.40 255.34)" font-size="10.5" fill="#1c1c1c" text-anchor="start" textLength="48.24" lengthAdjust="spacingAndGlyphs" >Die Attach</text>
<text x="323.70" y="255.34" transform="rotate(0.06 323.70 255.34)" font-size="10.5" fill="#1c1c1c" text-anchor="end" textLength="14.39" lengthAdjust="spacingAndGlyphs" >0.5</text>
<text x="328.70" y="271.01" transform="rotate(0.06 328.70 271.01)" font-size="10.5" fill="#1c1c1c" text-anchor="start" textLength="25.19" lengthAdjust="spacingAndGlyphs" >Silver</text>
<text x="469.60" y="271.01" transform="rotate(0.06 469.60 271.01)" font-size="10.5" fill="#1c1c1c" text-anchor="start" textLength="47.28" lengthAdjust="spacingAndGlyphs" >7440-22-4</text>
<text x="723.10" y="271.01" transform="rotate(0.06 723.10 271.01)" font-size="10.5" fill="#1c1c1c" text-anchor="end" textLength="34.56" lengthAdjust="spacingAndGlyphs" >980000</text>
<text x="840.40" y="271.01" transform="rotate(0.06 840.40 271.01)" font-size="10.5" fill="#1c1c1c" text-anchor="end" textLength="20.15" lengthAdjust="spacingAndGlyphs" >0.49</text>
<text x="328.70" y="286.67" transform="rotate(0.06 328.70 286.67)" font-size="10.5" fill="#1c1c1c" text-anchor="start" textLength="27.58" lengthAdjust="spacingAndGlyphs" >Epoxy</text>
<text x="723.10" y="286.67" transform="rotate(0.06 723.10 286.67)" font-size="10.5" fill="#1c1c1c" text-anchor="end" textLength="28.80" lengthAdjust="spacingAndGlyphs" >20000</text>
<text x="840.40" y="286.67" transform="rotate(0.06 840.40 286.67)" font-size="10.5" fill="#1c1c1c" text-anchor="end" textLength="20.15" lengthAdjust="spacingAndGlyphs" >0.01</text>
<text x="117.40" y="302.34" transform="rotate(0.06 117.40 302.34)" font-size="10.5" fill="#1c1c1c" text-anchor="start" textLength="53.78" lengthAdjust="spacingAndGlyphs" >Lead Frame</text>
<text x="323.70" y="302.34" transform="rotate(0.06 323.70 302.34)" font-size="10.5" fill="#1c1c1c" text-anchor="end" textLength="5.76" lengthAdjust="spacingAndGlyphs" >1</text>
<text x="328.70" y="318.00" transform="rotate(0.06 328.70 318.00)" font-size="10.5" fill="#1c1c1c" text-anchor="start" textLength="33.61" lengthAdjust="spacingAndGlyphs" >Copper</text>
<text x="469.60" y="318.00" transform="rotate(0.06 469.60 318.00)" font-size="10.5" fill="#1c1c1c" text-anchor="start" textLength="47.28" lengthAdjust="spacingAndGlyphs" >7440-50-8</text>
<text x="723.10" y="318.00" transform="rotate(0.06 723.10 318.00)" font-size="10.5" fill="#1c1c1c" text-anchor="end" textLength="34.56" lengthAdjust="spacingAndGlyphs" >250000</text>
<text x="840.40" y="318.00" transform="rotate(0.06 840.40 318.00)" font-size="10.5" fill="#1c1c1c" text-anchor="end" textLength="20.15" lengthAdjust="spacingAndGlyphs" >0.25</text>
<text x="328.70" y="333.67" transform="rotate(0.06 328.70 333.67)" font-size="10.5" fill="#1c1c1c" text-anchor="start" textLength="18.79" lengthAdjust="spacingAndGlyphs" >Iron</text>
<text x="469.60" y="333.67" transform="rotate(0.06 469.60 333.67)" font-size="10.5" fill="#1c1c1c" text-anchor="start" textLength="47.28" lengthAdjust="spacingAndGlyphs" >7439-89-6</text>
<text x="723.10" y="333.67" transform="rotate(0.06 723.10 333.67)" font-size="10.5" fill="#1c1c1c" text-anchor="end" textLength="34.56" lengthAdjust="spacingAndGlyphs" >250000</text>
<text x="840.40" y="333.67" transform="rotate(0.06 840.40 333.67)" font-size="10.5" fill="#1c1c1c" text-anchor="end" textLength="20.15" lengthAdjust="spacingAndGlyphs" >0.25</text>
<text x="328.70" y="349.33" transform="rotate(0.06 328.70 349.33)" font-size="10.5" fill="#1c1c1c" text-anchor="start" textLength="54.60" lengthAdjust="spacingAndGlyphs" >Phosphorus</text>
<text x="469.60" y="349.33" transform="rotate(0.06 469.60 349.33)" font-size="10.5" fill="#1c1c1c" text-anchor="start" textLength="47.28" lengthAdjust="spacingAndGlyphs" >7723-14-0</text>
<text x="723.10" y="349.33" transform="rotate(0.06 723.10 349.33)" font-size="10.5" fill="#1c1c1c" text-anchor="end" textLength="34.56" lengthAdjust="spacingAndGlyphs" >200000</text>
<text x="840.40" y="349.33" transform="rotate(0.06 840.40 349.33)" font-size="10.5" fill="#1c1c1c" text-anchor="end" textLength="14.39" lengthAdjust="spacingAndGlyphs" >0.2</text>
<text x="328.70" y="365.00" transform="rotate(0.06 328.70 365.00)" font-size="10.5" fill="#1c1c1c" text-anchor="start" textLength="18.71" lengthAdjust="spacingAndGlyphs" >Zinc</text>
<text x="469.60" y="365.00" transform="rotate(0.06 469.60 365.00)" font-size="10.5" fill="#1c1c1c" text-anchor="start" textLength="47.28" lengthAdjust="spacingAndGlyphs" >7440-66-6</text>
<text x="723.10" y="365.00" transform="rotate(0.06 723.10 365.00)" font-size="10.5" fill="#1c1c1c" text-anchor="end" textLength="34.56" lengthAdjust="spacingAndGlyphs" >300000</text>
<text x="840.40" y="365.00" transform="rotate(0.06 840.40 365.00)" font-size="10.5" fill="#1c1c1c" text-anchor="end" textLength="14.39" lengthAdjust="spacingAndGlyphs" >0.3</text>
<text x="117.40" y="380.66" transform="rotate(0.06 117.40 380.66)" font-size="10.5" fill="#1c1c1c" text-anchor="start" textLength="69.85" lengthAdjust="spacingAndGlyphs" >Semiconductor</text>
<text x="323.70" y="380.66" transform="rotate(0.06 323.70 380.66)" font-size="10.5" fill="#1c1c1c" text-anchor="end" textLength="20.15" lengthAdjust="spacingAndGlyphs" >0.25</text>
<text x="328.70" y="396.33" transform="rotate(0.06 328.70 396.33)" font-size="10.5" fill="#1c1c1c" text-anchor="start" textLength="62.97" lengthAdjust="spacingAndGlyphs" >Doped Silicon</text>
<text x="469.60" y="396.33" transform="rotate(0.06 469.60 396.33)" font-size="10.5" fill="#1c1c1c" text-anchor="start" textLength="47.28" lengthAdjust="spacingAndGlyphs" >7440-21-3</text>
<text x="723.10" y="396.33" transform="rotate(0.06 723.10 396.33)" font-size="10.5" fill="#1c1c1c" text-anchor="end" textLength="40.32" lengthAdjust="spacingAndGlyphs" >1000000</text>
<text x="840.40" y="396.33" transform="rotate(0.06 840.40 396.33)" font-size="10.5" fill="#1c1c1c" text-anchor="end" textLength="20.15" lengthAdjust="spacingAndGlyphs" >0.25</text>
<text x="23.60" y="412.00" transform="rotate(0.06 23.60 412.00)" font-size="10.5" fill="#1c1c1c" text-anchor="start" textLength="58.61" lengthAdjust="spacingAndGlyphs" >Demo Part-2</text>
<text x="117.40" y="412.00" transform="rotate(0.06 117.40 412.00)" font-size="10.5" fill="#1c1c1c" text-anchor="start" textLength="49.03" lengthAdjust="spacingAndGlyphs" >Bond Wire</text>
<text x="323.70" y="412.00" transform="rotate(0.06 323.70 412.00)" font-size="10.5" fill="#1c1c1c" text-anchor="end" textLength="20.15" lengthAdjust="spacingAndGlyphs" >0.25</text>
<text x="328.70" y="427.66" transform="rotate(0.06 328.70 427.66)" font-size="10.5" fill="#1c1c1c" text-anchor="start" textLength="21.74" lengthAdjust="spacingAndGlyphs" >Gold</text>
<text x="469.60" y="427.66" transform="rotate(0.06 469.60 427.66)" font-size="10.5" fill="#1c1c1c" text-anchor="start" textLength="47.28" lengthAdjust="spacingAndGlyphs" >7440-57-5</text>
<text x="723.10" y="427.66" transform="rotate(0.06 723.10 427.66)" font-size="10.5" fill="#1c1c1c" text-anchor="end" textLength="40.32" lengthAdjust="spacingAndGlyphs" >1000000</text>
<text x="840.40" y="427.66" transform="rotate(0.06 840.40 427.66)" font-size="10.5" fill="#1c1c1c" text-anchor="end" textLength="20.15" lengthAdjust="spacingAndGlyphs" >0.25</text>
<text x="117.40" y="443.32" transform="rotate(0.06 117.40 443.32)" font-size="10.5" fill="#1c1c1c" text-anchor="start" textLength="48.24" lengthAdjust="spacingAndGlyphs" >Die Attach</text>
<text x="323.70" y="443.32" transform="rotate(0.06 323.70 443.32)" font-size="10.5" fill="#1c1c1c" text-anchor="end" textLength="14.39" lengthAdjust="spacingAndGlyphs" >0.5</text>
<text x="328.70" y="458.99" transform="rotate(0.06 328.70 458.99)" font-size="10.5" fill="#1c1c1c" text-anchor="start" textLength="25.19" lengthAdjust="spacingAndGlyphs" >Silver</text>
<text x="469.60" y="458.99" transform="rotate(0.06 469.60 458.99)" font-size="10.5" fill="#1c1c1c" text-anchor="start" textLength="47.28" lengthAdjust="spacingAndGlyphs" >7440-22-4</text>
<text x="723.10" y="458.99" transform="rotate(0.06 723.10 458.99)" font-size="10.5" fill="#1c1c1c" text-anchor="end" textLength="34.56" lengthAdjust="spacingAndGlyphs" >986667</text>
<text x="840.40" y="458.99" transform="rotate(0.06 840.40 458.99)" font-size="10.5" fill="#1c1c1c" text-anchor="end" textLength="20.15" lengthAdjust="spacingAndGlyphs" >0.74</text>
<text x="328.70" y="474.65" transform="rotate(0.06 328.70 474.65)" font-size="10.5" fill="#1c1c1c" text-anchor="start" textLength="27.58" lengthAdjust="spacingAndGlyphs" >Epoxy</text>
<text x="723.10" y="474.65" transform="rotate(0.06 723.10 474.65)" font-size="10.5" fill="#1c1c1c" text-anchor="end" textLength="28.80" lengthAdjust="spacingAndGlyphs" >13333</text>
<text x="840.40" y="474.65" transform="rotate(0.06 840.40 474.65)" font-size="10.5" fill="#1c1c1c" text-anchor="end" textLength="20.15" lengthAdjust="spacingAndGlyphs" >0.01</text>
<text x="117.40" y="490.32" transform="rotate(0.06 117.40 490.32)" font-size="10.5" fill="#1c1c1c" text-anchor="start" textLength="53.78" lengthAdjust="spacingAndGlyphs" >Lead Frame</text>
<text x="323.70" y="490.32" transform="rotate(0.06 323.70 490.32)" font-size="10.5" fill="#1c1c1c" text-anchor="end" textLength="5.76" lengthAdjust="spacingAndGlyphs" >1</text>
<text x="328.70" y="505.99" transform="rotate(0.06 328.70 505.99)" font-size="10.5" fill="#1c1c1c" text-anchor="start" textLength="33.61" lengthAdjust="spacingAndGlyphs" >Copper</text>
<text x="469.60" y="505.99" transform="rotate(0.06 469.60 505.99)" font-size="10.5" fill="#1c1c1c" text-anchor="start" textLength="47.28" lengthAdjust="spacingAndGlyphs" >7440-50-8</text>
<text x="723.10" y="505.99" transform="rotate(0.06 723.10 505.99)" font-size="10.5" fill="#1c1c1c" text-anchor="end" textLength="34.56" lengthAdjust="spacingAndGlyphs" >250000</text>
<text x="840.40" y="505.99" transform="rotate(0.06 840.40 505.99)" font-size="10.5" fill="#1c1c1c" text-anchor="end" textLength="20.15" lengthAdjust="spacingAndGlyphs" >0.25</text>
<text x="328.70" y="521.65" transform="rotate(0.06 328.70 521.65)" font-size="10.5" fill="#1c1c1c" text-anchor="start" textLength="18.79" lengthAdjust="spacingAndGlyphs" >Iron</text>
<text x="469.60" y="521.65" transform="rotate(0.06 469.60 521.65)" font-size="10.5" fill="#1c1c1c" text-anchor="start" textLength="47.28" lengthAdjust="spacingAndGlyphs" >7439-89-6</text>
<text x="723.10" y="521.65" transform="rotate(0.06 723.10 521.65)" font-size="10.5" fill="#1c1c1c" text-anchor="end" textLength="34.56" lengthAdjust="spacingAndGlyphs" >250000</text>
<text x="840.40" y="521.65" transform="rotate(0.06 840.40 521.65)" font-size="10.5" fill="#1c1c1c" text-anchor="end" textLength="20.15" lengthAdjust="spacingAndGlyphs" >0.25</text>
<text x="328.70" y="537.31" transform="rotate(0.06 328.70 537.31)" font-size="10.5" fill="#1c1c1c" text-anchor="start" textLength="54.60" lengthAdjust="spacingAndGlyphs" >Phosphorus</text>
<text x="469.60" y="537.31" transform="rotate(0.06 469.60 537.31)" font-size="10.5" fill="#1c1c1c" text-anchor="start" textLength="47.28" lengthAdjust="spacingAndGlyphs" >7723-14-0</text>
<text x="723.10" y="537.31" transform="rotate(0.06 723.10 537.31)" font-size="10.5" fill="#1c1c1c" text-anchor="end" textLength="34.56" lengthAdjust="spacingAndGlyphs" >200000</text>
<text x="840.40" y="537.31" transform="rotate(0.06 840.40 537.31)" font-size="10.5" fill="#1c1c1c" text-anchor="end" textLength="14.39" lengthAdjust="spacingAndGlyphs" >0.2</text>
<text x="328.70" y="552.98" transform="rotate(0.06 328.70 552.98)" font-size="10.5" fill="#1c1c1c" text-anchor="start" textLength="21.85" lengthAdjust="spacingAndGlyphs" >Lead</text>
<text x="469.60" y="552.98" transform="rotate(0.06 469.60 552.98)" font-size="10.5" fill="#1c1c1c" text-anchor="start" textLength="47.28" lengthAdjust="spacingAndGlyphs" >7439-92-1</text>
<text x="723.10" y="552.98" transform="rotate(0.06 723.10 552.98)" font-size="10.5" fill="#1c1c1c" text-anchor="end" textLength="34.56" lengthAdjust="spacingAndGlyphs" >300000</text>
<text x="840.40" y="552.98" transform="rotate(0.06 840.40 552.98)" font-size="10.5" fill="#1c1c1c" text-anchor="end" textLength="14.39" lengthAdjust="spacingAndGlyphs" >0.3</text>
<text x="845.40" y="552.98" transform="rotate(0.06 845.40 552.98)" font-size="10.5" fill="#1c1c1c" text-anchor="start" textLength="23.86" lengthAdjust="spacingAndGlyphs" >15(a)</text>
<text x="117.40" y="568.64" transform="rotate(0.06 117.40 568.64)" font-size="10.5" fill="#1c1c1c" text-anchor="start" textLength="69.85" lengthAdjust="spacingAndGlyphs" >Semiconductor</text>
<text x="323.70" y="568.64" transform="rotate(0.06 323.70 568.64)" font-size="10.5" fill="#1c1c1c" text-anchor="end" textLength="20.15" lengthAdjust="spacingAndGlyphs" >0.25</text>
<text x="328.70" y="584.31" transform="rotate(0.06 328.70 584.31)" font-size="10.5" fill="#1c1c1c" text-anchor="start" textLength="62.97" lengthAdjust="spacingAndGlyphs" >Doped Silicon</text>
<text x="469.60" y="584.31" transform="rotate(0.06 469.60 584.31)" font-size="10.5" fill="#1c1c1c" text-anchor="start" textLength="47.28" lengthAdjust="spacingAndGlyphs" >7440-21-3</text>
<text x="723.10" y="584.31" transform="rotate(0.06 723.10 584.31)" font-size="10.5" fill="#1c1c1c" text-anchor="end" textLength="40.32" lengthAdjust="spacingAndGlyphs" >1000000</text>
<text x="840.40" y="584.31" transform="rotate(0.06 840.40 584.31)" font-size="10.5" fill="#1c1c1c" text-anchor="end" textLength="14.39" lengthAdjust="spacingAndGlyphs" >0.5</text>
<text x="23.60" y="599.98" transform="rotate(0.06 23.60 599.98)" font-size="10.5" fill="#1c1c1c" text-anchor="start" textLength="58.61" lengthAdjust="spacingAndGlyphs" >Demo Part-3</text>
<text x="117.40" y="599.98" transform="rotate(0.06 117.40 599.98)" font-size="10.5" fill="#1c1c1c" text-anchor="start" textLength="49.03" lengthAdjust="spacingAndGlyphs" >Bond Wire</text>
<text x="323.70" y="599.98" transform="rotate(0.06 323.70 599.98)" font-size="10.5" fill="#1c1c1c" text-anchor="end" textLength="14.39" lengthAdjust="spacingAndGlyphs" >0.5</text>
<text x="328.70" y="615.64" transform="rotate(0.06 328.70 615.64)" font-size="10.5" fill="#1c1c1c" text-anchor="start" textLength="21.74" lengthAdjust="spacingAndGlyphs" >Gold</text>
<text x="469.60" y="615.64" transform="rotate(0.06 469.60 615.64)" font-size="10.5" fill="#1c1c1c" text-anchor="start" textLength="47.28" lengthAdjust="spacingAndGlyphs" >7440-57-5</text>
<text x="723.10" y="615.64" transform="rotate(0.06 723.10 615.64)" font-size="10.5" fill="#1c1c1c" text-anchor="end" textLength="40.32" lengthAdjust="spacingAndGlyphs" >1000000</text>
<text x="840.40" y="615.64" transform="rotate(0.06 840.40 615.64)" font-size="10.5" fill="#1c1c1c" text-anchor="end" textLength="20.15" lengthAdjust="spacingAndGlyphs" >0.25</text>
<text x="117.40" y="631.30" transform="rotate(0.06 117.40 631.30)" font-size="10.5" fill="#1c1c1c" text-anchor="start" textLength="48.24" lengthAdjust="spacingAndGlyphs" >Die Attach</text>
<text x="323.70" y="631.30" transform="rotate(0.06 323.70 631.30)" font-size="10.5" fill="#1c1c1c" text-anchor="end" textLength="5.76" lengthAdjust="spacingAndGlyphs" >1</text>
<text x="328.70" y="646.97" transform="rotate(0.06 328.70 646.97)" font-size="10.5" fill="#1c1c1c" text-anchor="start" textLength="25.19" lengthAdjust="spacingAndGlyphs" >Silver</text>
<text x="469.60" y="646.97" transform="rotate(0.06 469.60 646.97)" font-size="10.5" fill="#1c1c1c" text-anchor="start" textLength="47.28" lengthAdjust="spacingAndGlyphs" >7440-22-4</text>
<text x="723.10" y="646.97" transform="rotate(0.06 723.10 646.97)" font-size="10.5" fill="#1c1c1c" text-anchor="end" textLength="34.56" lengthAdjust="spacingAndGlyphs" >990000</text>
<text x="840.40" y="646.97" transform="rotate(0.06 840.40 646.97)" font-size="10.5" fill="#1c1c1c" text-anchor="end" textLength="20.15" lengthAdjust="spacingAndGlyphs" >0.99</text>
<text x="328.70" y="662.63" transform="rotate(0.06 328.70 662.63)" font-size="10.5" fill="#1c1c1c" text-anchor="start" textLength="27.58" lengthAdjust="spacingAndGlyphs" >Epoxy</text>
<text x="723.10" y="662.63" transform="rotate(0.06 723.10 662.63)" font-size="10.5" fill="#1c1c1c" text-anchor="end" textLength="28.80" lengthAdjust="spacingAndGlyphs" >10000</text>
<text x="840.40" y="662.63" transform="rotate(0.06 840.40 662.63)" font-size="10.5" fill="#1c1c1c" text-anchor="end" textLength="20.15" lengthAdjust="spacingAndGlyphs" >0.01</text>
<rect x="4.00" y="663.40" width="1063.00" height="6.20" fill="#ffffff" />
<path d="M4.00,665.9 L776.3,665.9 Q778.3,665.9 778.3,667.9 L778.3,669.60 L4.00,669.60 Z" fill="#f2f4f8"/>
<path d="M4.00,665.9 L776.3,665.9 Q778.3,665.9 778.3,667.9 L778.3,669.60" fill="none" stroke="#a9bfdc" stroke-width="1"/>
<path d="M11.3,666.4 L13.2,668.6 L15.1,666.4" fill="none" stroke="#a9bfdc" stroke-width="1.2"/>
</g></g>
<rect x="14.00" y="134.00" width="97.10" height="96.00" fill="none" stroke="#ff0000" stroke-width="6.0"/>
<rect x="14.00" y="400.00" width="97.10" height="95.90" fill="none" stroke="#ff0000" stroke-width="6.0"/>
<rect x="111.10" y="134.00" width="223.00" height="266.00" fill="none" stroke="#ff0000" stroke-width="6.0"/>
<rect x="111.10" y="400.00" width="223.00" height="266.90" fill="none" stroke="#ff0000" stroke-width="6.0"/>
<path d="M49.90,231.70 L68.85,250.65 A26.80,26.80 0 1 1 30.95,250.65 Z" transform="rotate(7.1 49.90 269.60)" fill="#ff0000" stroke="#8a6a10" stroke-width="1.1" stroke-linejoin="miter"/>
<path d="M49.9,253.9 L54.1,253.9 L54.1,279.8 L59.9,279.8 L59.9,282.8 L43.0,282.8 L43.0,279.8 L49.9,279.8 L49.9,257.9 L43.3,261.6 L43.0,258.6 Z" fill="#123b4f"/>
<path d="M375.00,231.50 L393.95,250.45 A26.80,26.80 0 1 1 356.05,250.45 Z" transform="rotate(-90 375.00 269.40)" fill="#ff0000" stroke="#8a6a10" stroke-width="1.1" stroke-linejoin="miter"/>
<text x="376.0" y="281.8" font-size="41" fill="#123b4f" text-anchor="middle">2</text>
<path d="M923.10,510.50 L942.05,529.45 A26.80,26.80 0 1 1 904.15,529.45 Z" transform="rotate(-90 923.10 548.40)" fill="#ff0000" stroke="#8a6a10" stroke-width="1.1" stroke-linejoin="miter"/>
<text x="923.2" y="561.8" font-size="41" fill="#123b4f" text-anchor="middle">3</text>
</svg>
</body>
</html>
